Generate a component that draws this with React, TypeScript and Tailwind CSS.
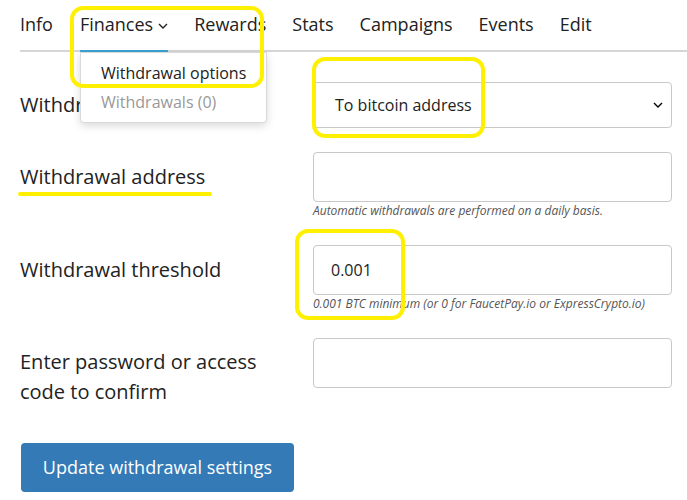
import React from 'react';

const tabs = ['Info', 'Finances', 'Rewards', 'Stats', 'Campaigns', 'Events', 'Edit'];

function Chevron({ className }: { className?: string }) {
  return (
    <svg viewBox="0 0 10 6" className={className} fill="none" stroke="currentColor" strokeWidth="1.4">
      <path d="M1 1l4 4 4-4" />
    </svg>
  );
}

export default function App() {
  return (
    <div className="relative h-[500px] w-[687px] overflow-hidden bg-white font-['Open_Sans',sans-serif] text-[#222]">
      {/* Tabs */}
      <nav className="ml-[20px] flex h-[52px] items-start gap-[26px] border-b-2 border-[#d6d6d6] pt-[10px] text-[18px] leading-[28px]">
        {tabs.map((tab) =>
          tab === 'Finances' ? (
            <div key={tab} className="relative ml-[1px] flex h-[40px] items-start">
              <span>{tab}</span>
              <Chevron className="ml-[5px] mt-[13px] h-[6px] w-[10px]" />
              <div className="absolute bottom-[-2px] left-0 right-0 h-[2px] bg-[#3aa3d4]" />
            </div>
          ) : (
            <span key={tab}>{tab}</span>
          )
        )}
      </nav>

      {/* Dropdown menu */}
      <div className="absolute left-[80px] top-[52px] z-10 h-[71px] w-[187px] rounded-b-[4px] border border-[#d9d9d9] bg-white pt-[6px] text-[16px] leading-[29px] shadow-[0_3px_8px_rgba(0,0,0,0.15)]">
        <div className="pl-[20px] text-[#222]">Withdrawal options</div>
        <div className="pl-[20px] text-[#999]">Withdrawals (0)</div>
      </div>

      {/* Form */}
      <div className="mt-[30px] pl-[20px] pr-[15px]">
        <div className="grid grid-cols-[293px_1fr]">
          <div className="flex h-[46px] items-center text-[20px]">Withdrawal method</div>
          <div className="flex h-[46px] items-center justify-between rounded-[4px] border border-[#c8c8c8] pl-[21px] pr-[8px] text-[16px]">
            <span>To bitcoin address</span>
            <Chevron className="h-[6px] w-[10px] text-black" />
          </div>
        </div>

        <div className="mt-[24px] grid grid-cols-[293px_1fr]">
          <div className="flex h-[50px] items-center text-[20px]">Withdrawal address</div>
          <div>
            <div className="h-[50px] rounded-[4px] border border-[#c8c8c8]" />
            <div className="mt-[1px] text-[12px] italic leading-[15px] text-[#555]">
              Automatic withdrawals are performed on a daily basis.
            </div>
          </div>
        </div>

        <div className="mt-[27px] grid grid-cols-[293px_1fr]">
          <div className="flex h-[50px] items-center text-[20px]">Withdrawal threshold</div>
          <div>
            <div className="flex h-[50px] items-center rounded-[4px] border border-[#c8c8c8] pl-[17px] text-[16px]">
              0.001
            </div>
            <div className="mt-[1px] text-[12px] italic leading-[15px] text-[#555]">
              0.001 BTC minimum (or 0 for FaucetPay.io or ExpressCrypto.io)
            </div>
          </div>
        </div>

        <div className="mt-[27px] grid grid-cols-[293px_1fr]">
          <div className="pr-[20px] pt-[9px] text-[20px] leading-[30px]">Enter password or access code to confirm</div>
          <div className="h-[50px] rounded-[4px] border border-[#c8c8c8]" />
        </div>

        <button className="ml-[1px] mt-[36px] h-[49px] w-[273px] rounded-[4px] bg-[#337ab7] text-[18px] text-white">
          Update withdrawal settings
        </button>
      </div>

      {/* Yellow annotations */}
      <div className="pointer-events-none absolute left-[70px] top-[6px] z-20 h-[82px] w-[194px] rounded-[13px] border-[4px] border-[#fff000]" />
      <div className="pointer-events-none absolute left-[312px] top-[57px] z-20 h-[81px] w-[173px] rounded-[13px] border-[4px] border-[#fff000]" />
      <div className="pointer-events-none absolute left-[295px] top-[229px] z-20 h-[91px] w-[110px] rounded-[13px] border-[4px] border-[#fff000]" />
      <div className="pointer-events-none absolute left-[18px] top-[192px] z-20 h-[4px] w-[194px] rounded-full bg-[#fff000]" />
    </div>
  );
}
